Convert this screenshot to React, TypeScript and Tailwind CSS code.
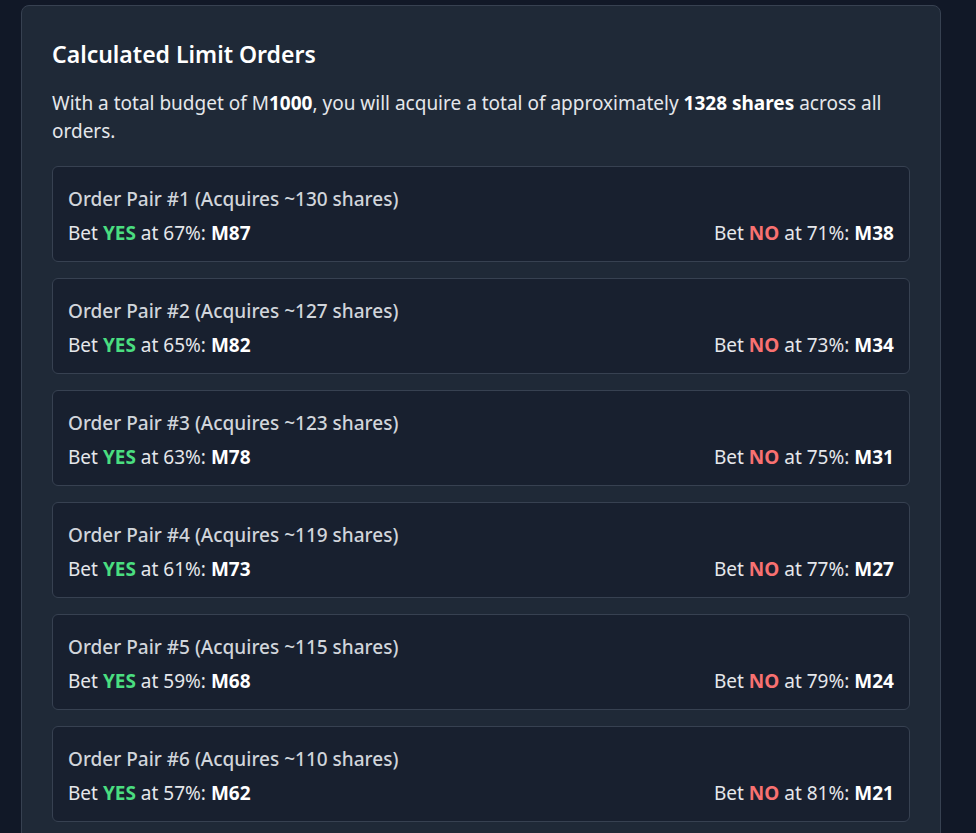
const orders = [
  { n: 1, shares: 130, yesPct: 67, yesAmt: 87, noPct: 71, noAmt: 38 },
  { n: 2, shares: 127, yesPct: 65, yesAmt: 82, noPct: 73, noAmt: 34 },
  { n: 3, shares: 123, yesPct: 63, yesAmt: 78, noPct: 75, noAmt: 31 },
  { n: 4, shares: 119, yesPct: 61, yesAmt: 73, noPct: 77, noAmt: 27 },
  { n: 5, shares: 115, yesPct: 59, yesAmt: 68, noPct: 79, noAmt: 24 },
  { n: 6, shares: 110, yesPct: 57, yesAmt: 62, noPct: 81, noAmt: 21 },
];

export default function App() {
  return (
    <div
      className="min-h-screen bg-[#111827] pl-[21px] pt-[5px] text-[#e5e7eb]"
      style={{ fontFamily: '"Noto Sans", "Open Sans", sans-serif' }}
    >
      <div className="w-[920px] rounded-lg border border-[#374151] bg-[#1f2937] px-[30px] pt-8 pb-8">
        <h2 className="mb-[19px] text-[23px] leading-8 font-semibold text-white">Calculated Limit Orders</h2>
        <p className="mb-[21px] text-[19px] leading-7 text-[#e5e7eb]">
          With a total budget of M<strong className="font-bold text-white">1000</strong>, you will acquire a total of
          approximately <strong className="font-bold text-white">1328 shares</strong> across all orders.
        </p>

        <div className="flex flex-col gap-4">
          {orders.map((o) => (
            <div
              key={o.n}
              className="rounded-md border border-[#374151] bg-[#18202f] px-[15px] pt-[18px] pb-[14px]"
            >
              <div className="mb-[6px] text-[19px] leading-7 font-medium text-[#d1d5db]">
                Order Pair #{o.n} (Acquires ~{o.shares} shares)
              </div>
              <div className="flex items-center justify-between text-[19px] leading-7 text-[#e5e7eb]">
                <span>
                  Bet <span className="font-bold text-[#4ade80]">YES</span> at {o.yesPct}%:{" "}
                  <span className="font-bold text-white">M{o.yesAmt}</span>
                </span>
                <span>
                  Bet <span className="font-bold text-[#f87171]">NO</span> at {o.noPct}%:{" "}
                  <span className="font-bold text-white">M{o.noAmt}</span>
                </span>
              </div>
            </div>
          ))}
        </div>
      </div>
    </div>
  );
}
